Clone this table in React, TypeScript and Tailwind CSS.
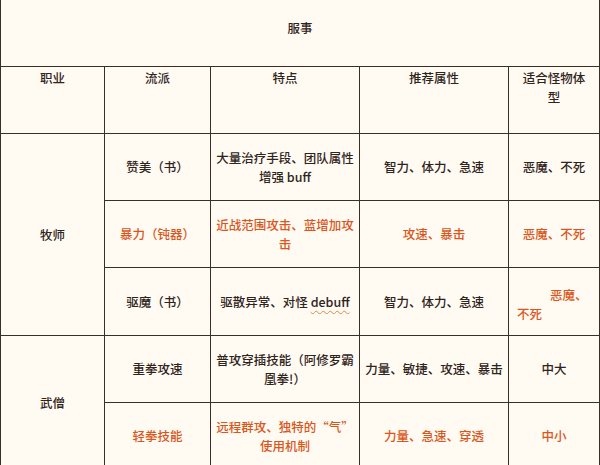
import React from "react";

const D = "text-[#2f241b]";
const O = "text-[#d9571c]";
const B = "border-[1.5px] border-[#3a2f26]";

function Td({ children, className = "", rowSpan }: { children: React.ReactNode; className?: string; rowSpan?: number }) {
  return (
    <td rowSpan={rowSpan} className={`${B} align-middle text-center ${className}`}>
      {children}
    </td>
  );
}

export default function App() {
  return (
    <div
      className="w-[600px] h-[465px] overflow-hidden bg-[#fffaf2] font-medium"
      style={{ fontFamily: '"Noto Sans CJK SC", "Noto Sans", sans-serif' }}
    >
      <table className="table-fixed border-collapse w-[599px] text-[12.5px] leading-[19px]">
        <colgroup>
          <col className="w-[104px]" />
          <col className="w-[106px]" />
          <col className="w-[149px]" />
          <col className="w-[149px]" />
          <col className="w-[91px]" />
        </colgroup>
        <tbody>
          <tr className="h-[66px]">
            <td colSpan={5} className={`${B} border-t-0 text-center align-middle pb-[10px] ${D}`}>
              服事
            </td>
          </tr>
          <tr className="h-[67px]">
            <td className={`${B} align-top text-center pt-[1px] ${D}`}>职业</td>
            <td className={`${B} align-top text-center pt-[1px] ${D}`}>流派</td>
            <td className={`${B} align-top text-center pt-[1px] ${D}`}>特点</td>
            <td className={`${B} align-top text-center pt-[1px] ${D}`}>推荐属性</td>
            <td className={`${B} align-top text-center pt-[1px] px-[8px] ${D}`}>适合怪物体型</td>
          </tr>
          <tr className="h-[67px]">
            <Td rowSpan={3} className={D}>牧师</Td>
            <Td className={D}>赞美（书）</Td>
            <Td className={`px-[5px] ${D}`}>大量治疗手段、团队属性增强 buff</Td>
            <Td className={`px-[5px] ${D}`}>智力、体力、急速</Td>
            <Td className={`px-[8px] ${D}`}>恶魔、不死</Td>
          </tr>
          <tr className="h-[67px]">
            <Td className={O}>暴力（钝器）</Td>
            <Td className={`px-[5px] ${O}`}>近战范围攻击、蓝增加攻击</Td>
            <Td className={`px-[5px] ${O}`}>攻速、暴击</Td>
            <Td className={`px-[8px] ${O}`}>恶魔、不死</Td>
          </tr>
          <tr className="h-[68px]">
            <Td className={D}>驱魔（书）</Td>
            <Td className={`px-[5px] ${D}`}>
              驱散异常、对怪{" "}
              <span className="underline decoration-wavy decoration-[#d98a45] decoration-[1px] underline-offset-[3px]">
                debuff
              </span>
            </Td>
            <Td className={`px-[5px] ${D}`}>智力、体力、急速</Td>
            <td className={`${B} align-middle text-left px-[8px] pt-[6px] indent-[33px] ${O}`}>恶魔、不死</td>
          </tr>
          <tr className="h-[67px]">
            <Td rowSpan={2} className={D}>武僧</Td>
            <Td className={D}>重拳攻速</Td>
            <Td className={`px-[5px] ${D}`}>普攻穿插技能（阿修罗霸凰拳!）</Td>
            <Td className={`px-[2px] ${D}`}>力量、敏捷、攻速、暴击</Td>
            <Td className={`px-[8px] ${D}`}>中大</Td>
          </tr>
          <tr className="h-[67px]">
            <Td className={O}>轻拳技能</Td>
            <Td className={`px-[2px] ${O}`}>
              <span className="whitespace-nowrap">远程群攻、独特的“气”</span>
              <br />
              使用机制
            </Td>
            <Td className={`px-[5px] ${O}`}>力量、急速、穿透</Td>
            <Td className={`px-[8px] ${O}`}>中小</Td>
          </tr>
        </tbody>
      </table>
    </div>
  );
}
